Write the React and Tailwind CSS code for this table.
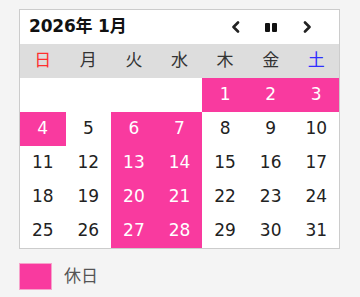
import React from "react";

const WEEKDAYS = [
  { label: "日", color: "text-[#ff2f2f]" },
  { label: "月", color: "text-[#333]" },
  { label: "火", color: "text-[#333]" },
  { label: "水", color: "text-[#333]" },
  { label: "木", color: "text-[#333]" },
  { label: "金", color: "text-[#333]" },
  { label: "土", color: "text-[#2f2fff]" },
];

const HOLIDAYS = [1, 2, 3, 4, 6, 7, 13, 14, 20, 21, 27, 28];

// Jan 2026 starts on Thursday
const cells = [
  ...Array(4).fill(null),
  ...Array.from({ length: 31 }, (_, i) => i + 1),
];

const font = { fontFamily: '"DejaVu Sans", "Noto Sans CJK JP", sans-serif' };

function Chevron({ dir }) {
  return (
    <svg width="10" height="12" viewBox="0 0 10 12" className="text-[#222]">
      <polyline
        points={dir === "left" ? "7,1.5 2.5,6 7,10.5" : "3,1.5 7.5,6 3,10.5"}
        fill="none"
        stroke="currentColor"
        strokeWidth="2.6"
        strokeLinecap="round"
        strokeLinejoin="round"
      />
    </svg>
  );
}

export default function App() {
  return (
    <div className="min-h-[297px] w-[360px] bg-[#f4f4f4] pl-[19px] pt-[9px]" style={font}>
      <div className="w-[321px] border border-[#cccccc] bg-white">
        {/* Header */}
        <div className="flex h-[34px] items-center pl-[9px]">
          <span className="text-[17px] font-bold text-[#111] tracking-[-0.2px]">2026年 1月</span>
          <div className="ml-auto flex items-center">
            <button className="flex w-[10px] items-center justify-center mr-[24px]">
              <Chevron dir="left" />
            </button>
            <button className="flex items-center gap-[2px] mr-[25px]">
              <span className="block h-[9px] w-[5px] rounded-[1px] bg-[#111]" />
              <span className="block h-[9px] w-[5px] rounded-[1px] bg-[#111]" />
            </button>
            <button className="flex w-[10px] items-center justify-center mr-[27px]">
              <Chevron dir="right" />
            </button>
          </div>
        </div>

        {/* Weekdays */}
        <div className="grid h-[34px] grid-cols-7 bg-[#dddddd]">
          {WEEKDAYS.map((w) => (
            <div key={w.label} className={`flex items-center justify-center text-[17px] ${w.color}`}>
              {w.label}
            </div>
          ))}
        </div>

        {/* Days */}
        <div className="grid grid-cols-7">
          {cells.map((d, i) => {
            const holiday = d && HOLIDAYS.includes(d);
            return (
              <div
                key={i}
                className={`flex h-[34px] items-center justify-center text-[17px] ${
                  holiday ? "bg-[#f93a9f] text-white" : "text-[#222]"
                }`}
              >
                {d}
              </div>
            );
          })}
        </div>
      </div>

      {/* Legend */}
      <div className="mt-[14px] flex items-center">
        <span className="block h-[27px] w-[33px] border border-[#f6a3cb] bg-[#f93a9f]" />
        <span className="ml-[12px] text-[17px] text-[#555]">休日</span>
      </div>
    </div>
  );
}
